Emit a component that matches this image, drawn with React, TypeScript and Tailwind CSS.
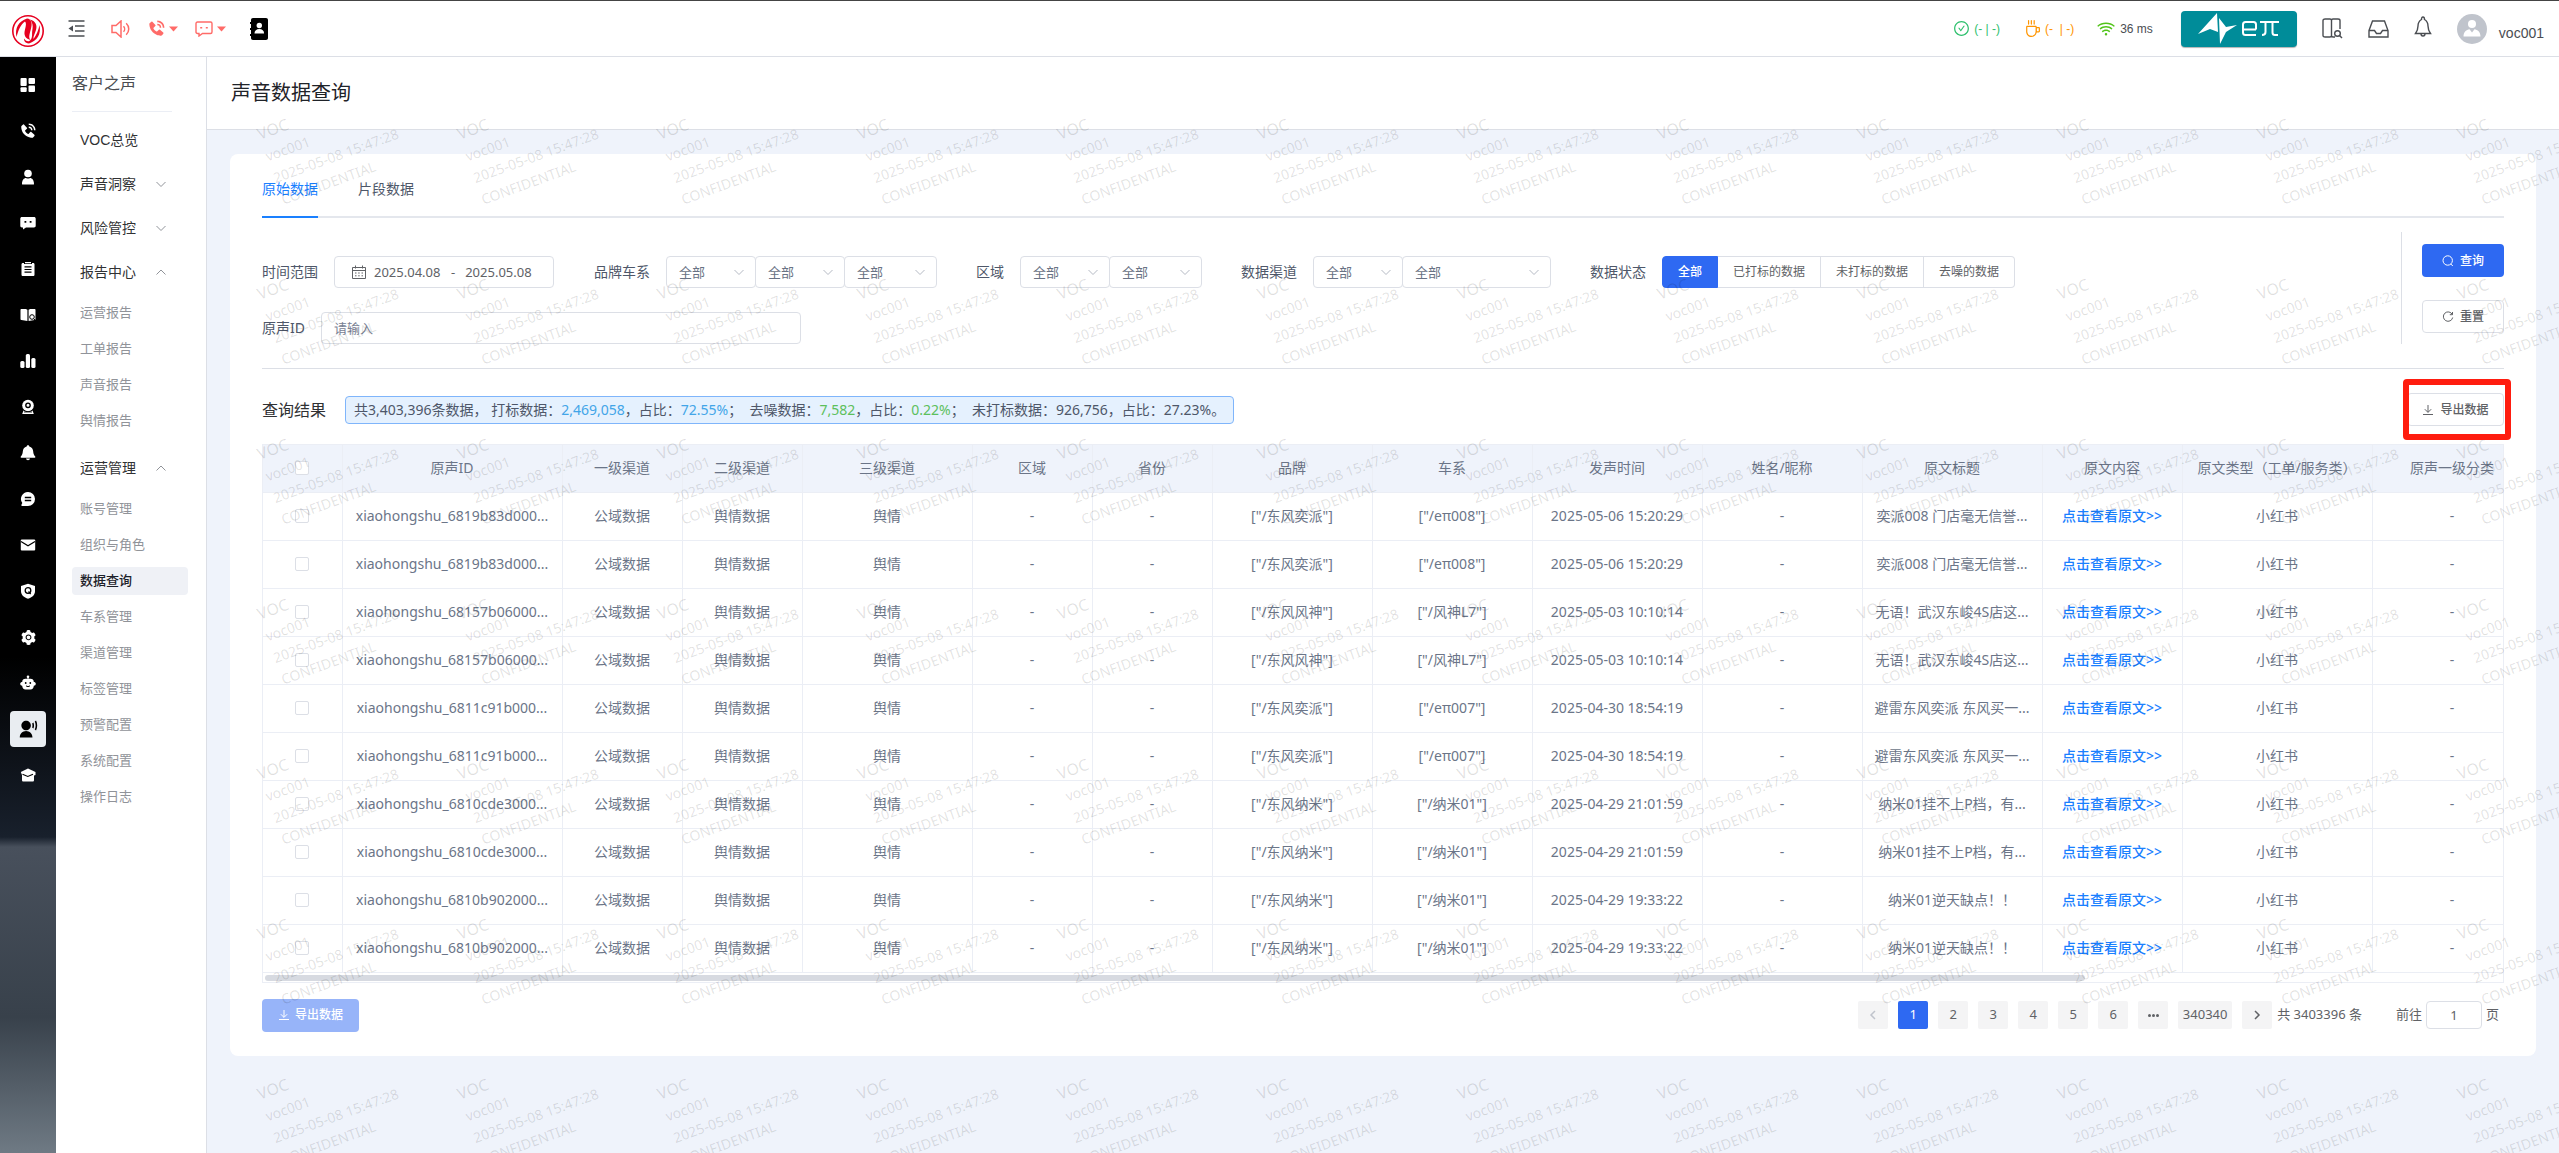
import type { ReactNode } from "react";
import { BiSolidPhoneCall } from "react-icons/bi";
import { AiFillSetting, AiOutlineCheckCircle, AiOutlineCoffee, AiOutlineWifi } from "react-icons/ai";
import { RiUserVoiceFill } from "react-icons/ri";

const columns = [
  { title: "原声ID", width: 220 },
  { title: "一级渠道", width: 120 },
  { title: "二级渠道", width: 120 },
  { title: "三级渠道", width: 170 },
  { title: "区域", width: 120 },
  { title: "省份", width: 120 },
  { title: "品牌", width: 160 },
  { title: "车系", width: 160 },
  { title: "发声时间", width: 170 },
  { title: "姓名/昵称", width: 160 },
  { title: "原文标题", width: 180 },
  { title: "原文内容", width: 140 },
  { title: "原文类型（工单/服务类）", width: 190 },
  { title: "原声一级分类", width: 160 },
];

const rows = [
  { id: "xiaohongshu_6819b83d000...", brand: "东风奕派", series: "eπ008", time: "2025-05-06 15:20:29", title: "奕派008 门店毫无信誉..." },
  { id: "xiaohongshu_6819b83d000...", brand: "东风奕派", series: "eπ008", time: "2025-05-06 15:20:29", title: "奕派008 门店毫无信誉..." },
  { id: "xiaohongshu_68157b06000...", brand: "东风风神", series: "风神L7", time: "2025-05-03 10:10:14", title: "无语！武汉东峻4S店这..." },
  { id: "xiaohongshu_68157b06000...", brand: "东风风神", series: "风神L7", time: "2025-05-03 10:10:14", title: "无语！武汉东峻4S店这..." },
  { id: "xiaohongshu_6811c91b000...", brand: "东风奕派", series: "eπ007", time: "2025-04-30 18:54:19", title: "避雷东风奕派 东风买一..." },
  { id: "xiaohongshu_6811c91b000...", brand: "东风奕派", series: "eπ007", time: "2025-04-30 18:54:19", title: "避雷东风奕派 东风买一..." },
  { id: "xiaohongshu_6810cde3000...", brand: "东风纳米", series: "纳米01", time: "2025-04-29 21:01:59", title: "纳米01挂不上P档，有..." },
  { id: "xiaohongshu_6810cde3000...", brand: "东风纳米", series: "纳米01", time: "2025-04-29 21:01:59", title: "纳米01挂不上P档，有..." },
  { id: "xiaohongshu_6810b902000...", brand: "东风纳米", series: "纳米01", time: "2025-04-29 19:33:22", title: "纳米01逆天缺点！！" },
  { id: "xiaohongshu_6810b902000...", brand: "东风纳米", series: "纳米01", time: "2025-04-29 19:33:22", title: "纳米01逆天缺点！！" },
];

function Glyph({ children, size = 16 }: { children: ReactNode; size?: number }) {
  return (
    <svg width={size} height={size} viewBox="0 0 16 16" fill="currentColor">
      {children}
    </svg>
  );
}

function Chevron({ up = false, className = "" }: { up?: boolean; className?: string }) {
  return (
    <svg width="10" height="10" viewBox="0 0 10 10" fill="none" stroke="currentColor" className={className}>
      <path d={up ? "M0.5 7.5 5 3l4.500 4.500" : "M0.500 3 5 7.500 9.500 3"} />
    </svg>
  );
}

function Caret() {
  return (
    <svg width="9" height="6" viewBox="0 0 9 6" fill="currentColor">
      <path d="M0 0.500h9L4.500 5.500z" />
    </svg>
  );
}

function DownloadIcon() {
  return (
    <svg width="12" height="12" viewBox="0 0 12 12" fill="none" stroke="currentColor">
      <path d="M6 1v7.200M2.800 5.200 6 8.400l3.200-3.200M1 10.500h10" />
    </svg>
  );
}

const railItems: { name: string; icon: ReactNode; active?: boolean }[] = [
  {
    name: "工作台",
    icon: (
      <Glyph>
        <rect x="0.500" y="1" width="6.200" height="8" rx="1" />
        <rect x="0.500" y="10.300" width="6.200" height="4.700" rx="1" />
        <rect x="8.500" y="1" width="6.500" height="6" rx="1" />
        <rect x="8.500" y="8.500" width="6.500" height="6.500" rx="1" />
      </Glyph>
    ),
  },
  { name: "电话", icon: <BiSolidPhoneCall size={18} /> },
  {
    name: "用户",
    icon: (
      <Glyph>
        <circle cx="8" cy="4.500" r="3.800" />
        <path d="M2 15c0-4 2-6 4-6 1.200.8 2.800.8 4 0 2 0 4 2 4 6 0 .4-.3.600-.600.600H2.600C2.200 15.600 2 15.400 2 15z" />
      </Glyph>
    ),
  },
  {
    name: "在线会话",
    icon: (
      <Glyph>
        <path d="M2 2h12c1 0 1.700.7 1.700 1.700v7c0 1-.7 1.700-1.700 1.700H6l-3 2v-2H2c-1 0-1.700-.7-1.700-1.700v-7C.3 2.700 1 2 2 2z" />
        <path d="M4.500 6h1.800v1.800H4.500zM9.700 6h1.800v1.800H9.700z" fill="#000" />
      </Glyph>
    ),
  },
  {
    name: "工单",
    icon: (
      <Glyph>
        <path d="M3 2h1v1h8V2h1c1 0 1.500.5 1.500 1.500v10c0 1-.5 1.500-1.500 1.500H3c-1 0-1.500-.5-1.500-1.500v-10C1.500 2.500 2 2 3 2zM5 1h6v1.300H5z" />
        <path d="M4.500 5.800h7M4.500 8.500h7M4.500 11.200h7" stroke="#000" strokeWidth="1.200" />
      </Glyph>
    ),
  },
  {
    name: "知识库",
    icon: (
      <Glyph>
        <path d="M1.500 2h4.300l1.600.8V14L1.500 13C.8 13 .5 12.500.5 12V3c0-.6.4-1 1-1zM8.600 2.800 10.200 2h4.300c.6 0 1 .4 1 1v9c0 .6-.3 1-1 1l-5.900 1z" />
        <circle cx="12" cy="10" r="2.300" fill="none" stroke="#000" />
        <path d="m13.700 11.700 2 2" stroke="#000" />
      </Glyph>
    ),
  },
  {
    name: "报表",
    icon: (
      <Glyph>
        <rect x="0.300" y="8" width="4.200" height="7" rx="1.500" />
        <rect x="5.800" y="1" width="4.200" height="14" rx="1.500" />
        <rect x="11.300" y="5" width="4.200" height="10" rx="1.500" />
      </Glyph>
    ),
  },
  {
    name: "质检",
    icon: (
      <Glyph>
        <circle cx="8" cy="6.500" r="5.800" />
        <path d="M3.500 11.500c2.500 2 6.500 2 9 0l1.300 3.500H2.200z" />
        <circle cx="8" cy="6.300" r="2.200" fill="none" stroke="#000" strokeWidth="1.400" />
        <path d="M4 13h8" stroke="#000" strokeWidth="0.800" />
      </Glyph>
    ),
  },
  {
    name: "通知",
    icon: (
      <Glyph>
        <path d="M8 .3c.8 0 1.200.5 1.300 1.200 2.500.6 3.700 2.500 3.900 5 .1 2.300.8 3.700 2 5 .4.5.2 1.200-.5 1.200H1.300c-.7 0-.9-.7-.5-1.200 1.200-1.300 1.900-2.700 2-5 .2-2.500 1.400-4.400 3.900-5C6.800.8 7.200.3 8 .3zM6 13.600h4c-.2 1-1 1.700-2 1.700s-1.800-.7-2-1.700z" />
      </Glyph>
    ),
  },
  {
    name: "消息",
    icon: (
      <Glyph>
        <path d="M8 1a7 7 0 1 1 0 14H1.500v-1.500l.8-1.400A7 7 0 0 1 8 1z" />
        <path d="M4.800 6.500h6.400M4.800 9.500h6.400" stroke="#000" strokeWidth="1.300" />
      </Glyph>
    ),
  },
  {
    name: "邮件",
    icon: (
      <Glyph>
        <rect x="0.800" y="2.500" width="14.400" height="11" rx="1" />
        <path d="m1 4.500 7 4.300 7-4.300" fill="none" stroke="#000" strokeWidth="1.200" />
      </Glyph>
    ),
  },
  {
    name: "质量",
    icon: (
      <Glyph>
        <path d="M8 .8 15 3v5c0 4-3 6.500-7 7.700C4 14.500 1 12 1 8V3z" />
        <circle cx="8" cy="7.500" r="2.800" fill="none" stroke="#000" strokeWidth="1.300" />
        <path d="m8.500 8.500 2.200 2.500" stroke="#000" strokeWidth="1.200" />
      </Glyph>
    ),
  },
  { name: "设置", icon: <AiFillSetting size={17} /> },
  {
    name: "机器人",
    icon: (
      <Glyph>
        <circle cx="8" cy="1.700" r="1.300" />
        <path d="M7.500 2h1v2h-1z" />
        <path d="M5.500 3.800h5c2 0 3.300 1.200 3.300 3.200.9 0 2 .5 2 1.800s-.8 2-2 2c-.1 2.200-1.300 3.700-3.300 3.700h-5c-2 0-3.200-1.500-3.300-3.700-1.200 0-2-.7-2-2S1.300 7 2.200 7c0-2 1.300-3.200 3.300-3.200z" />
        <circle cx="5.700" cy="8" r="0.900" fill="#000" />
        <circle cx="10.300" cy="8" r="0.900" fill="#000" />
        <path d="M6 10.800c1.200 1 2.800 1 4 0" fill="none" stroke="#000" />
      </Glyph>
    ),
  },
  { name: "客户之声", icon: <RiUserVoiceFill size={19} />, active: true },
  {
    name: "培训",
    icon: (
      <Glyph>
        <path d="M8 1.500 15.500 5v3l-1.500.500V13c0 1-.5 1.500-1.500 1.500h-9C2.500 14.500 2 14 2 13V8L.8 5z" />
        <path d="M2.500 7.200 7.800 9.500 13 7.200" fill="none" stroke="#000" strokeWidth="1.100" />
      </Glyph>
    ),
  },
];

function Header() {
  return (
    <header className="flex h-[57px] items-center border-t border-b border-t-[#444] border-b-[#dcdfe6] bg-white pr-[15px] pl-3 font-['Liberation_Sans','Noto_Sans_CJK_SC',sans-serif]">
      <svg width="32" height="32" viewBox="0 0 32 32" className="mt-1">
        <circle cx="16" cy="16" r="15.200" fill="#fff" stroke="#e60020" strokeWidth="1.600" />
        <path
          d="M4.500 22C2.500 13 7 6 15 3.500c4.500.5 5.500 4.500 4 10-1 4.500-3 9-.500 11.500-5.500-1.500-7-5-5.500-10.500 1-4 1.500-6.500 0-8C8.500 9.500 6.500 15 4.500 22z"
          fill="#e60020"
        />
        <path
          d="M27.500 10c2 9-2.500 16-10.500 18.500-4.500-.5-5-3-5-5 1.500 2.500 4.500 4 6.500 1.500 2.500-2.500 1-6.500 2-11 .5-3.500 0-6.500-2.500-9.500C23.500 6 25.500 10 24 15c-1 3.500-3 6.500-2.500 9C24.500 20 26.500 15 27.500 10z"
          fill="#e60020"
        />
      </svg>
      <button aria-label="收起菜单" className="ml-6 text-[#4a4d52]">
        <svg width="17" height="17" viewBox="0 0 17 17" fill="none" stroke="currentColor" strokeWidth="1.500">
          <path d="M0.500 1h16M7 6h9.500M7 11h9.500M0.500 16h16" />
          <path d="M0.500 8.500 5 5.500v6z" fill="currentColor" stroke="none" />
        </svg>
      </button>
      <button aria-label="播报" className="ml-[26px] text-[#ff6b68]">
        <svg width="20" height="18" viewBox="0 0 20 18" fill="none" stroke="currentColor" strokeWidth="1.500">
          <path d="M1 5.500h4L10 1v16l-5-4.500H1z" />
          <path d="M12.500 6.200c1.500 1.500 1.500 4.100 0 5.600M15.200 3.300c3.400 3.300 3.400 8.100 0 11.400" />
        </svg>
      </button>
      <button aria-label="电话" className="ml-4 flex items-center gap-[3px] text-[#ff6b68]">
        <BiSolidPhoneCall size={19} />
        <Caret />
      </button>
      <button aria-label="会话" className="ml-[17px] flex items-center gap-1 text-[#ff6b68]">
        <svg width="18" height="16" viewBox="0 0 18 16" fill="none" stroke="currentColor" strokeWidth="1.400">
          <path d="M2.500 1h13c.9 0 1.500.6 1.500 1.500v8.500c0 .9-.6 1.500-1.500 1.500H7.500L4 15v-2.500H2.500C1.600 12.500 1 11.900 1 11V2.500C1 1.600 1.600 1 2.500 1z" />
          <path d="M5.200 6h2v1.600h-2zM10.800 6h2v1.600h-2z" fill="currentColor" stroke="none" />
        </svg>
        <Caret />
      </button>
      <button aria-label="通讯录" className="ml-6 text-black">
        <svg width="18" height="22" viewBox="0 0 18 22" fill="currentColor">
          <path d="M3 0h13c1.200 0 2 .8 2 2v18c0 1.200-.8 2-2 2H3c-1.200 0-2-.8-2-2v-2H0v-2h1v-4H0v-2h1V6H0V4h1V2C1 .8 1.800 0 3 0z" />
          <circle cx="9.300" cy="7.500" r="2.700" fill="#fff" />
          <path d="M4.500 15.500c0-3 2-4.500 4.800-4.500s4.800 1.500 4.800 4.500z" fill="#fff" />
        </svg>
      </button>

      <div className="ml-auto flex items-center text-xs">
        <span className="flex items-center gap-1 text-[#2fc06e]">
          <AiOutlineCheckCircle size={17} />
          (- | -)
        </span>
        <span className="ml-6 flex items-center gap-1 whitespace-pre text-[#ff9500]">
          <AiOutlineCoffee size={17} />
          {"(-  | -)"}
        </span>
        <span className="ml-[22px] flex items-center gap-1 text-[#4a4d52]">
          <AiOutlineWifi size={20} className="text-[#52c41a]" />
          36 ms
        </span>
        <button
          aria-label="eπ"
          className="ml-7 flex h-9 w-[116px] items-center justify-center rounded-sm bg-[#008c99] shadow-[0_1px_1px_rgba(0,0,0,0.3)]"
        >
          <svg width="82" height="34" viewBox="0 0 82 34" fill="none">
            <path d="M0 22 19 1l1 19-8-3z" fill="#fff" />
            <path d="M21 6l1 26 6-12 11-7-11 2z" fill="#fff" />
            <path d="M58 17.500H45M58 23H47.500c-1.600 0-2.500-.9-2.500-2.500V12.500c0-1.600.9-2.500 2.500-2.500H55.500c1.600 0 2.500.9 2.500 2.500v5" stroke="#fff" strokeWidth="2" />
            <path d="M62 10h19M67.500 10v10c0 2-1 3-3.500 3M74.500 10v10.500c0 1.600.9 2.500 2.500 2.500h3" stroke="#fff" strokeWidth="2" />
          </svg>
        </button>
        <button aria-label="知识搜索" className="ml-[25px] text-[#4a4d52]">
          <svg width="21" height="21" viewBox="0 0 21 21" fill="none" stroke="currentColor" strokeWidth="1.400">
            <path d="M9.500 1v18M3 1h5c1 0 1.500.5 1.500 1.500v15C9.500 18.500 9 19 8 19H3c-1 0-2-.5-2-1.500v-15C1 1.500 2 1 3 1zM9.500 2.500C9.500 1.500 10 1 11 1h5c1 0 2 .5 2 1.500V11M9.500 17.500c0 1 .5 1.500 1.500 1.500h2" />
            <circle cx="15.500" cy="15.500" r="2.800" />
            <path d="m17.500 17.500 2.500 2.500" />
          </svg>
        </button>
        <button aria-label="收件箱" className="ml-[25px] text-[#4a4d52]">
          <svg width="21" height="18" viewBox="0 0 21 18" fill="none" stroke="currentColor" strokeWidth="1.400">
            <path d="M1 10.500 4.500 1h12L20 10.500V17H1zM1 10.500h5.500l2 3h4l2-3H20" />
          </svg>
        </button>
        <button aria-label="通知" className="mb-1 ml-[25px] text-[#4a4d52]">
          <svg width="18" height="21" viewBox="0 0 18 21" fill="none" stroke="currentColor" strokeWidth="1.400">
            <path d="M9 1c1 0 1.500.8 1.500 2.500C13 5 14 7.500 14 10c0 3 .8 5 2.500 7.500h-15C3.200 15 4 13 4 10c0-2.500 1-5 3.500-6.500C7.500 1.800 8 1 9 1zM7 17.800c0 1.500 1 2.200 2 2.200s2-.7 2-2.200" />
          </svg>
        </button>
        <svg width="30" height="30" viewBox="0 0 30 30" className="ml-[25px]">
          <circle cx="15" cy="15" r="15" fill="#c0c4cc" />
          <circle cx="15" cy="10" r="4" fill="#fff" />
          <path d="M6.500 22.500c0-4.500 3-7 6-7.300l2.500 3.300 2.500-3.300c3 .3 6 2.800 6 7.300z" fill="#fff" />
        </svg>
        <span className="mt-2 ml-3 text-sm text-[#4a4d52]">voc001</span>
      </div>
    </header>
  );
}

function Rail() {
  return (
    <nav className="flex w-14 shrink-0 flex-col items-center gap-[10px] bg-[linear-gradient(to_bottom,#000_0,#000_600px,#18202c_780px,#48505c_790px,#38414b_960px,#6f7a84_1096px)] pt-[10px] text-white">
      {railItems.map((item) => (
        <button
          key={item.name}
          aria-label={item.name}
          className={
            item.active
              ? "flex size-9 items-center justify-center rounded bg-[#e9edf1] text-black"
              : "flex size-9 items-center justify-center"
          }
        >
          {item.icon}
        </button>
      ))}
    </nav>
  );
}

function MenuGroup({ title, open, items }: { title: string; open?: boolean; items?: string[] }) {
  return (
    <li>
      <button className="flex h-11 w-full items-center justify-between pr-[22px] pl-2 text-sm text-[#303133]">
        {title}
        <Chevron up={open} className="text-[#909399]" />
      </button>
      {items && (
        <ul className="mb-[11px] flex flex-col gap-2 pt-[5px]">
          {items.map((item) => (
            <li key={item}>
              <a
                href="#"
                className={
                  item === "数据查询"
                    ? "block h-7 rounded bg-[#eff1f6] pl-2 text-[13px] leading-7 font-medium text-[#1d2129]"
                    : "block h-7 pl-2 text-[13px] leading-7 text-[#909399]"
                }
              >
                {item}
              </a>
            </li>
          ))}
        </ul>
      )}
    </li>
  );
}

function SubMenu() {
  return (
    <aside className="w-[151px] shrink-0 border-r border-[#dcdfe6] bg-white pr-[18px] pl-4 font-['Liberation_Sans','Noto_Sans_CJK_SC',sans-serif]">
      <h2 className="mr-4 border-b border-[#ebeef5] py-[15px] text-base text-[#4a4d52]">客户之声</h2>
      <ul className="pt-[6px]">
        <li>
          <a href="#" className="flex h-11 items-center pl-2 text-sm text-[#303133]">
            VOC总览
          </a>
        </li>
        <MenuGroup title="声音洞察" />
        <MenuGroup title="风险管控" />
        <MenuGroup title="报告中心" open items={["运营报告", "工单报告", "声音报告", "舆情报告"]} />
        <MenuGroup
          title="运营管理"
          open
          items={["账号管理", "组织与角色", "数据查询", "车系管理", "渠道管理", "标签管理", "预警配置", "系统配置", "操作日志"]}
        />
      </ul>
    </aside>
  );
}

function Select({ label, className }: { label: string; className: string }) {
  return (
    <span className={`relative -mr-px block ${className}`}>
      <select
        aria-label={label}
        className="h-8 w-full appearance-none rounded border border-[#dcdfe6] bg-white pl-3 text-[13px] text-[#697284]"
      >
        <option>全部</option>
      </select>
      <Chevron className="pointer-events-none absolute top-[11px] right-3 text-[#b4b9c3]" />
    </span>
  );
}

function Filters() {
  return (
    <form className="mt-[14px] flex justify-between border-b border-[#dcdfe6] pb-6 text-sm text-[#4e5769]">
      <div className="flex flex-col gap-6 pt-6">
        <div className="flex items-center gap-10">
          <div className="flex items-center gap-4">
            <label htmlFor="start">时间范围</label>
            <div className="flex h-8 w-[220px] items-center rounded border border-[#dcdfe6] pl-[17px] text-[13px] text-[#606266]">
              <svg width="14" height="14" viewBox="0 0 14 14" fill="none" stroke="#606266">
                <path d="M0.500 2.500h13v11h-13zM0.500 5.500h13M3.500 0.500v3M10.500 0.500v3M3 8h1.500M6.200 8h1.500M9.500 8H11M3 10.800h1.500M6.200 10.800h1.500M9.500 10.800H11" />
              </svg>
              <input id="start" defaultValue="2025.04.08" className="ml-2 w-[72px]" />
              <span className="mx-[5px]">-</span>
              <input aria-label="结束日期" defaultValue="2025.05.08" className="ml-[5px] w-[72px]" />
            </div>
          </div>
          <div className="flex items-center gap-4">
            <span>品牌车系</span>
            <div className="flex">
              <Select label="品牌" className="w-[90px]" />
              <Select label="车系" className="w-[90px]" />
              <Select label="车型" className="w-[93px]" />
            </div>
          </div>
          <div className="flex items-center gap-4">
            <span>区域</span>
            <div className="flex">
              <Select label="大区" className="w-[90px]" />
              <Select label="省份" className="w-[93px]" />
            </div>
          </div>
          <div className="flex items-center gap-4">
            <span>数据渠道</span>
            <div className="flex">
              <Select label="一级渠道" className="w-[90px]" />
              <Select label="二级渠道" className="w-[149px]" />
            </div>
          </div>
          <div className="flex items-center gap-4">
            <span>数据状态</span>
            <div className="flex text-xs text-[#606266]">
              <button type="button" className="h-8 rounded-l border border-[#2e69f2] bg-[#2e69f2] px-[15px] font-medium text-white">
                全部
              </button>
              <button type="button" className="h-8 border border-l-0 border-[#dcdfe6] px-[15px]">
                已打标的数据
              </button>
              <button type="button" className="h-8 border border-l-0 border-[#dcdfe6] px-[15px]">
                未打标的数据
              </button>
              <button type="button" className="h-8 rounded-r border border-l-0 border-[#dcdfe6] px-[15px]">
                去噪的数据
              </button>
            </div>
          </div>
        </div>
        <div className="flex items-center gap-4">
          <label htmlFor="voice-id">原声ID</label>
          <input
            id="voice-id"
            placeholder="请输入"
            className="h-8 w-[480px] rounded border border-[#dcdfe6] px-3 text-[13px] placeholder:text-[#7a8294]"
          />
        </div>
      </div>
      <div className="flex flex-col gap-[23px] border-l border-[#dcdfe6] pt-3 pb-[11px] pl-5 text-xs">
        <button type="button" className="flex h-[33px] w-[82px] items-center justify-center gap-[6px] rounded-sm bg-[#2e69f2] font-medium text-white">
          <svg width="12" height="12" viewBox="0 0 12 12" fill="none" stroke="currentColor">
            <circle cx="5.700" cy="5.500" r="4.700" />
            <path d="m8.800 9 2 2" />
          </svg>
          查询
        </button>
        <button
          type="reset"
          className="flex h-[33px] w-[82px] items-center justify-center gap-[6px] rounded-sm border border-[#dcdfe6] font-medium text-[#606266]"
        >
          <svg width="12" height="12" viewBox="0 0 12 12" fill="none" stroke="currentColor">
            <path d="M10.300 3.500A4.700 4.700 0 1 0 10.700 6.500M10.500 1v2.700H7.800" />
          </svg>
          重置
        </button>
      </div>
    </form>
  );
}

function ResultTable() {
  return (
    <div className="mt-[18px] border border-[#ebeef5]">
      <div className="overflow-hidden">
        <table className="-mt-px -ml-px w-[2270px] table-fixed border-collapse text-center text-sm whitespace-nowrap text-[#6b7588]">
          <colgroup>
            <col style={{ width: 80 }} />
            {columns.map((c) => (
              <col key={c.title} style={{ width: c.width }} />
            ))}
          </colgroup>
          <thead>
            <tr className="h-12 border-b border-[#ebeef5] bg-[#eff3fb]">
              <th className="border-r border-[#ebeef5]">
                <input
                  type="checkbox"
                  aria-label="全选"
                  className="mx-auto block size-[14px] appearance-none rounded-xs border border-[#dcdfe6] bg-white"
                />
              </th>
              {columns.map((c) => (
                <th key={c.title} className="border-r border-[#ebeef5] font-normal">
                  {c.title}
                </th>
              ))}
            </tr>
          </thead>
          <tbody>
            {rows.map((row, i) => (
              <tr key={i} className="h-12 border-b border-[#ebeef5] *:border-r *:border-[#ebeef5]">
                <td>
                  <input
                    type="checkbox"
                    aria-label={`选择第${i + 1}行`}
                    className="mx-auto block size-[14px] appearance-none rounded-xs border border-[#dcdfe6] bg-white"
                  />
                </td>
                <td>{row.id}</td>
                <td>公域数据</td>
                <td>舆情数据</td>
                <td>舆情</td>
                <td>-</td>
                <td>-</td>
                <td>{`["/${row.brand}"]`}</td>
                <td>{`["/${row.series}"]`}</td>
                <td>{row.time}</td>
                <td>-</td>
                <td>{row.title}</td>
                <td>
                  <a href="#" className="font-medium text-[#1a80ff]">
                    点击查看原文&gt;&gt;
                  </a>
                </td>
                <td>小红书</td>
                <td>-</td>
              </tr>
            ))}
          </tbody>
        </table>
      </div>
      <div className="h-[9px] px-[2px] pt-[2px]">
        <div className="h-[6px] w-[81.400%] rounded-full bg-[#d7dae1]" />
      </div>
    </div>
  );
}

function Pagination() {
  return (
    <div className="flex items-center pr-[5px] text-[13px] text-[#606266]">
      <div className="flex gap-[10px]">
        <button aria-label="上一页" className="flex h-7 w-[30px] items-center justify-center rounded-xs bg-[#f4f4f5] text-[#c0c4cc]">
          <svg width="8" height="10" viewBox="0 0 8 10" fill="none" stroke="currentColor" strokeWidth="1.500">
            <path d="M6 1 2 5l4 4" />
          </svg>
        </button>
        <button className="h-7 w-[30px] rounded-xs bg-[#2e69f2] text-white">1</button>
        {[2, 3, 4, 5, 6].map((n) => (
          <button key={n} className="h-7 w-[30px] rounded-xs bg-[#f4f4f5]">
            {n}
          </button>
        ))}
        <button aria-label="更多" className="flex h-7 w-[30px] items-center justify-center gap-px rounded-xs bg-[#f4f4f5]">
          <i className="size-[3px] rounded-full bg-[#606266]" />
          <i className="size-[3px] rounded-full bg-[#606266]" />
          <i className="size-[3px] rounded-full bg-[#606266]" />
        </button>
        <button className="h-7 w-[54px] rounded-xs bg-[#f4f4f5]">340340</button>
        <button aria-label="下一页" className="flex h-7 w-[30px] items-center justify-center rounded-xs bg-[#f4f4f5]">
          <svg width="8" height="10" viewBox="0 0 8 10" fill="none" stroke="currentColor" strokeWidth="1.500">
            <path d="m2 1 4 4-4 4" />
          </svg>
        </button>
      </div>
      <span className="ml-[5px]">共 3403396 条</span>
      <label className="ml-[34px] flex items-center gap-1">
        前往
        <input defaultValue="1" className="h-7 w-14 rounded border border-[#dcdfe6] bg-white text-center" />
        页
      </label>
    </div>
  );
}

function Watermark() {
  return (
    <div
      aria-hidden="true"
      className="pointer-events-none absolute inset-0 overflow-hidden pt-[67px] pl-[47px] font-['Noto_Sans',sans-serif] text-sm leading-[23px] text-black/12 select-none"
    >
      {Array.from({ length: 7 }, (_, r) => (
        <div key={r} className="flex h-40">
          {Array.from({ length: 12 }, (_, c) => (
            <div key={c} className="w-[200px] shrink-0">
              <div className="w-max origin-top-left -rotate-20">
                <p className="text-base leading-[23px]">VOC</p>
                <p>voc001</p>
                <p>2025-05-08 15:47:28</p>
                <p>CONFIDENTIAL</p>
              </div>
            </div>
          ))}
        </div>
      ))}
    </div>
  );
}

export default function App() {
  return (
    <div className="flex min-h-screen flex-col bg-[#eff3fb] font-['Noto_Sans','Noto_Sans_CJK_SC',sans-serif]">
      <Header />
      <div className="flex flex-1">
        <Rail />
        <SubMenu />
        <main className="relative min-w-0 flex-1">
          <h1 className="flex h-[73px] items-center border-b border-[#dcdfe6] bg-white pl-6 text-xl text-[#1f2329]">声音数据查询</h1>
          <section className="mx-[23px] mt-6 rounded-lg bg-white px-8 pt-[23px] pb-6">
            <div className="flex gap-10 border-b-2 border-[#e4e7ed] text-sm leading-6 text-[#4e5769]">
              <button className="-mb-[2px] border-b-2 border-[#1a80ff] pb-[15px] text-[#1a80ff]">原始数据</button>
              <button className="-mb-[2px] pb-[17px]">片段数据</button>
            </div>
            <Filters />
            <div className="mt-6 flex h-[33px] items-center">
              <h2 className="text-base text-[#303133]">查询结果</h2>
              <p className="ml-[19px] h-7 rounded border border-[#7fb5fb] bg-[#e5f1fe] px-2 text-sm leading-[26px] whitespace-pre text-[#4e5769]">
                共3,403,396条数据， 打标数据：<span className="text-[#42a5e8]">2,469,058</span>，占比：
                <span className="text-[#42a5e8]">72.55%</span>；{"  "}去噪数据：<span className="text-[#5cc05c]">7,582</span>，占比：
                <span className="text-[#5cc05c]">0.22%</span>；{"  "}未打标数据：926,756，占比：27.23%。
              </p>
              {/* highlight frame around the export button */}
              <div className="relative ml-auto">
                <button className="flex h-[33px] w-[97px] items-center justify-center gap-[6px] rounded-sm border border-[#dcdfe6] text-xs font-medium text-[#606266]">
                  <DownloadIcon />
                  导出数据
                </button>
                <div className="pointer-events-none absolute -inset-y-[14px] -right-[7px] -left-1 z-10 rounded-sm border-[6px] border-[#ff1d0f]" />
              </div>
            </div>
            <ResultTable />
            <div className="mt-4 flex items-center justify-between">
              <button disabled className="flex h-[33px] w-[97px] items-center justify-center gap-[5px] rounded-sm bg-[#97b4f9] text-xs font-medium text-white">
                <DownloadIcon />
                导出数据
              </button>
              <Pagination />
            </div>
          </section>
          <Watermark />
        </main>
      </div>
    </div>
  );
}
